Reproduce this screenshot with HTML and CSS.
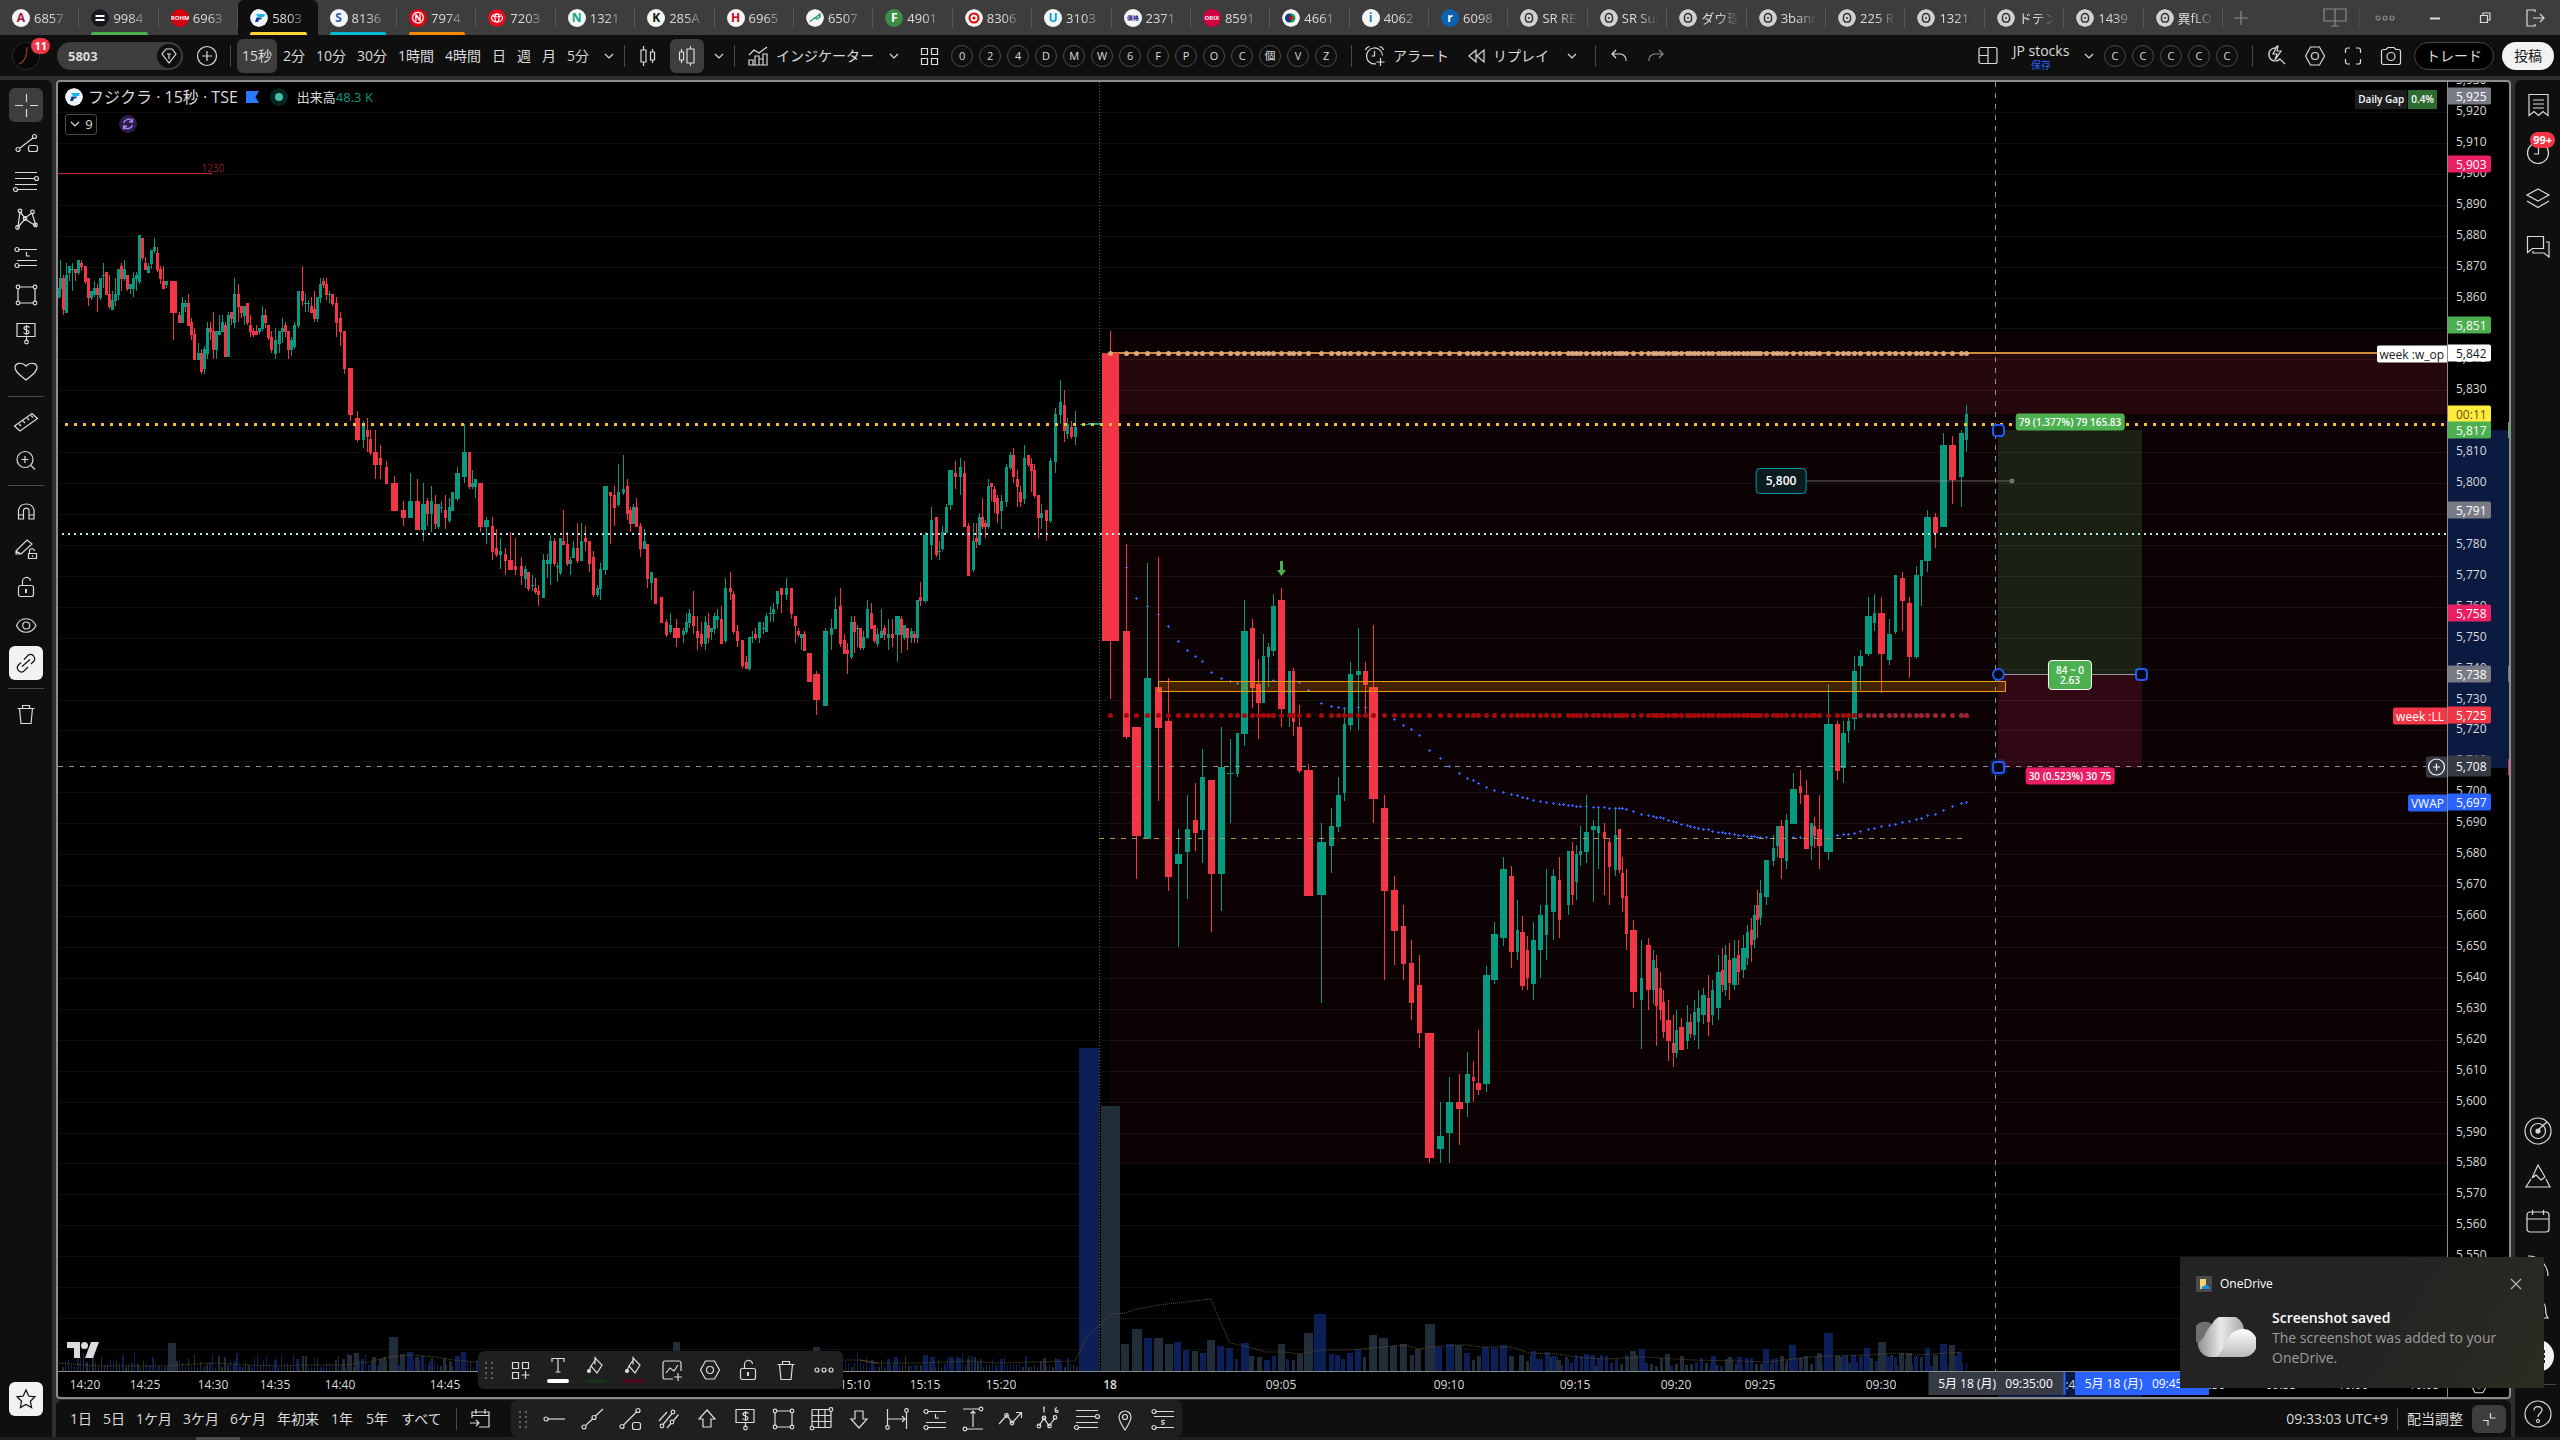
FILE: index.html
```html
<!DOCTYPE html>
<html lang="ja">
<head>
<meta charset="utf-8">
<meta name="viewport" content="width=device-width, initial-scale=1">
<title>5803 フジクラ</title>
<link rel="stylesheet" href="styles.css">
</head>
<body>
<svg class="sprite" aria-hidden="true">
  <symbol id="plus" viewBox="0 0 28 28"><path d="M14 7v14M7 14h14"/></symbol>
  <symbol id="plusc" viewBox="0 0 28 28"><circle cx="14" cy="14" r="9.5"/><path d="M14 9v10M9 14h10"/></symbol>
  <symbol id="chev" viewBox="0 0 12 28"><path d="M2 12l4 4 4-4"/></symbol>
  <symbol id="candles" viewBox="0 0 28 28"><path d="M9.5 4v4M9.5 20v4M7 8h5v12H7zM18.500 7v3M18.500 18v3M16.500 10h4v8h-4z"/></symbol>
  <symbol id="hollow" viewBox="0 0 28 28"><path d="M8.500 7v3M8.500 18v3M6.500 10h4v8h-4zM17.500 4v3M17.500 21v3M14 7h7v14h-7z"/></symbol>
  <symbol id="indic" viewBox="0 0 28 28"><path d="M5 13l5-5 5 3 8-6M5 23v-5h4v5zM11 23v-9h4v9M15 23v-6h4v6M19 23V12h4v11zM5 23h18"/></symbol>
  <symbol id="grid4" viewBox="0 0 28 28"><path d="M6.500 6.500h6v6h-6zM16.500 6.500h6v6h-6zM6.500 16.500h6v6h-6zM16.500 16.500h6v6h-6z"/></symbol>
  <symbol id="grid3" viewBox="0 0 28 28"><path d="M6.500 6.500h6v6h-6zM16.500 6.500h6v6h-6zM6.500 16.500h6v6h-6zM19.500 15v8M15.500 19h8"/></symbol>
  <symbol id="alarm" viewBox="0 0 28 28"><path d="M21.500 13.500a8 8 0 1 0-6.500 8.300M13.500 9v5h-3M4.500 8a5 5 0 0 1 4-3.500M18.500 4.500A5 5 0 0 1 22.500 8M19.500 16v8M15.500 20h8"/></symbol>
  <symbol id="rewind" viewBox="0 0 28 28"><path d="M13 8v12l-7-6zM21 8v12l-7-6z"/></symbol>
  <symbol id="undo" viewBox="0 0 28 28"><path d="M11 8l-4 4 4 4M7 12h8a6 6 0 0 1 6 7"/></symbol>
  <symbol id="redo" viewBox="0 0 28 28"><path d="M17 8l4 4-4 4M21 12h-8a6 6 0 0 0-6 7"/></symbol>
  <symbol id="layout" viewBox="0 0 28 28"><rect x="5" y="5.500" width="18" height="16" rx="2"/><path d="M14 5.500v16M5 13.500h9"/></symbol>
  <symbol id="search" viewBox="0 0 28 28"><path d="M14 6a6.500 6.500 0 1 0 4 11l5 5M15 4l-4 8h4l-2 6 6-9h-4l1-5z"/></symbol>
  <symbol id="hex" viewBox="0 0 28 28"><path d="M9.500 5h9l5 9-5 9h-9l-5-9z"/><circle cx="14" cy="14" r="3.500"/></symbol>
  <symbol id="full" viewBox="0 0 28 28"><path d="M6.500 11V8a2 2 0 0 1 2-2H11M17 6h2.500a2 2 0 0 1 2 2v3M21.500 17v3a2 2 0 0 1-2 2H17M11 22H8.500a2 2 0 0 1-2-2v-3"/></symbol>
  <symbol id="camera" viewBox="0 0 28 28"><path d="M4.500 9.500a2 2 0 0 1 2-2H9l2-2h6l2 2h2.500a2 2 0 0 1 2 2v11a2 2 0 0 1-2 2h-15a2 2 0 0 1-2-2z"/><circle cx="14" cy="14.500" r="4"/></symbol>
  <symbol id="screen" viewBox="0 0 28 28"><path d="M3 5h22v12H3zM14 5v17M10 22h8"/></symbol>
  <symbol id="dots" viewBox="0 0 28 28"><circle cx="7" cy="14" r="2"/><circle cx="14" cy="14" r="2"/><circle cx="21" cy="14" r="2"/></symbol>
  <symbol id="mini" viewBox="0 0 28 28"><path d="M9 14.500h10" stroke-width="2"/></symbol>
  <symbol id="restore" viewBox="0 0 28 28"><path d="M9.500 11.500h7v7h-7zM12 11V9h7v7h-2"/></symbol>
  <symbol id="exit" viewBox="0 0 28 28"><path d="M14 8V6H6v16h8v-2M12 14h11M19 10l4 4-4 4"/></symbol>
  <symbol id="cross" viewBox="0 0 28 28"><path d="M14.500 3v8M14.500 18v8M3 14.500h8M18 14.500h8"/></symbol>
  <symbol id="lineshape" viewBox="0 0 28 28"><circle cx="6" cy="20.500" r="2"/><circle cx="22.500" cy="7.500" r="2"/><path d="M8 19L21 9"/><rect x="16.500" y="16.500" width="9" height="6" rx="2"/></symbol>
  <symbol id="linebox" viewBox="0 0 28 28"><circle cx="5" cy="21.500" r="2"/><circle cx="21" cy="5.500" r="2"/><path d="M6.500 20L19.500 7"/><rect x="15.500" y="17.500" width="8" height="7" rx="2"/></symbol>
  <symbol id="fib" viewBox="0 0 28 28"><path d="M3 5.500h22M3 11.500h20M3 17.500h22M5 22.500h20"/><circle cx="24.500" cy="11.500" r="2"/><circle cx="3.500" cy="22.500" r="2"/></symbol>
  <symbol id="pattern" viewBox="0 0 28 28"><path d="M6 22L8 7l5 6 7-5 4 13-11-7z"/><circle cx="5.500" cy="22.500" r="1.800"/><circle cx="8" cy="6" r="1.800"/><circle cx="13" cy="13.500" r="1.800"/><circle cx="20.500" cy="7" r="1.800"/><circle cx="23.500" cy="20" r="1.800"/></symbol>
  <symbol id="forecast" viewBox="0 0 28 28"><circle cx="5" cy="6.500" r="2"/><circle cx="5" cy="22.500" r="2"/><path d="M7 6.500h18M5 17.500h20M7 22.500h18M14.500 9v4H18"/></symbol>
  <symbol id="rect" viewBox="0 0 28 28"><path d="M7 6h15M7 22h15M6 8v12M23 8v12"/><circle cx="6" cy="6" r="1.800"/><circle cx="23" cy="6" r="1.800"/><circle cx="6" cy="22" r="1.800"/><circle cx="23" cy="22" r="1.800"/></symbol>
  <symbol id="dollar" viewBox="0 0 28 28"><path d="M5 4.500h18v13H5zM14.500 17.500v4"/><circle cx="14.500" cy="23" r="1.800"/><path d="M17.500 8.500c-2-2-6-1-5.500 1s5 1 5 3.500-4 2.500-5.500.5M14.500 6v10"/></symbol>
  <symbol id="heart" viewBox="0 0 28 28"><path d="M14 23C8 18 3 15 3 10.500 3 6 10 4.500 14 9c4-4.500 11-3 11 1.500C25 15 20 18 14 23z"/></symbol>
  <symbol id="ruler" viewBox="0 0 28 28"><path d="M2.500 18L20 5.500l5.500 5L8 23zM7 16l2 2M11 13l2 2M15 10l2 2M19 7.500l2 2"/></symbol>
  <symbol id="zoomin" viewBox="0 0 28 28"><circle cx="13" cy="13.500" r="8"/><path d="M19 19.500l4 4M13 10v7M9.500 13.500h7"/></symbol>
  <symbol id="magnet" viewBox="0 0 28 28"><path d="M6.500 22V13a8 8 0 0 1 15.500 0v9h-5v-9a3 3 0 0 0-5.500 0v9zM6.500 18h5M17 18h5"/></symbol>
  <symbol id="pencil" viewBox="0 0 28 28"><path d="M4 16L15 5l5 4L9 19H4zM4 16l5 3M17.500 18v-1.500a2.500 2.500 0 0 1 5-.5M16.500 18.500h8v5h-8zM20.500 20.500v1.500"/></symbol>
  <symbol id="unlock" viewBox="0 0 28 28"><path d="M10.500 12.500V9a4 4 0 0 1 8-1"/><rect x="6.500" y="12.500" width="15" height="11" rx="2"/><path d="M14 16v4" stroke-width="2"/></symbol>
  <symbol id="eye" viewBox="0 0 28 28"><path d="M4.500 14.500c4-9 15-9 19.500 0-4.500 9-15.500 9-19.500 0z"/><circle cx="14.200" cy="14.500" r="3.500"/></symbol>
  <symbol id="link" viewBox="0 0 28 28"><path d="M10 17.500l8-7M12 10.500l3-3a4 4 0 0 1 7 0c2 3 0 5-2 6.500l-1 1M16 18l-3 3a4 4 0 0 1-7 0c-2-3 0-5 2-6.500l1-1"/></symbol>
  <symbol id="trash" viewBox="0 0 28 28"><path d="M5.500 8.500h17M7.500 8.500l1.500 15h10l1.500-15M10.500 8V5.500h7V8"/></symbol>
  <symbol id="star" viewBox="0 0 28 28"><path d="M14 5l2.800 6 6.200.8-4.600 4.400 1.200 6.300L14 19.400l-5.600 3.100 1.200-6.300L5 11.800l6.200-.8z"/></symbol>
  <symbol id="hline" viewBox="0 0 28 28"><circle cx="5" cy="14" r="2"/><path d="M7 14h17"/></symbol>
  <symbol id="trend" viewBox="0 0 28 28"><circle cx="5" cy="22" r="2"/><circle cx="15" cy="12.500" r="2"/><path d="M6.500 20.500l7-6.500M16.500 11L24 4"/></symbol>
  <symbol id="channel" viewBox="0 0 28 28"><circle cx="7" cy="21" r="1.800"/><circle cx="18" cy="7" r="1.800"/><circle cx="17" cy="17" r="1.800"/><path d="M8 19.500L17 8.500M4 16l8-9M12 23l4-4.500M18.500 15.500l5-6"/></symbol>
  <symbol id="up" viewBox="0 0 28 28"><path d="M14 5l8 9h-4v8h-8v-8H6z"/></symbol>
  <symbol id="down" viewBox="0 0 28 28"><path d="M14 23l8-9h-4V6h-8v8H6z"/></symbol>
  <symbol id="table" viewBox="0 0 28 28"><path d="M5 4.500h17M5 10.500h19M5 16.500h19M7 22.500h17M5 4.500v17M11.500 4.500v18M18 4.500v18M24 6v16.500"/><circle cx="24" cy="4.500" r="1.800"/><circle cx="5" cy="23" r="1.800"/></symbol>
  <symbol id="hrange" viewBox="0 0 28 28"><path d="M4.500 4v17M23.500 7v17M5 14h17M19 11l3 3-3 3"/><circle cx="4.500" cy="22.500" r="1.800"/><circle cx="23.500" cy="5.500" r="1.800"/></symbol>
  <symbol id="vrange" viewBox="0 0 28 28"><path d="M4 4h16M8 24h16M14 22V6M11.500 8.500L14 6l2.500 2.500"/><circle cx="22" cy="4" r="1.800"/><circle cx="6" cy="24" r="1.800"/></symbol>
  <symbol id="zig" viewBox="0 0 28 28"><path d="M2 19l8-9 5 8 9-10M19 7.500h5.500V13"/><circle cx="9.500" cy="10.500" r="1.800"/><circle cx="15" cy="18" r="1.800"/></symbol>
  <symbol id="elliott" viewBox="0 0 28 28"><path d="M4 21l5-8 5 8 6-8"/><circle cx="4" cy="21" r="1.800"/><circle cx="9" cy="13" r="1.800"/><circle cx="14.500" cy="21" r="1.800"/><circle cx="20" cy="12.500" r="1.800"/><path d="M8 3.500l1-1v5M22 2.500c-3 1-2 5 0 5s1-3-1-2"/></symbol>
  <symbol id="pin" viewBox="0 0 28 28"><path d="M14 25c-4-6-6-9-6-13a6 6 0 0 1 12 0c0 4-2 7-6 13z"/><circle cx="14" cy="12" r="2.500"/></symbol>
  <symbol id="spos" viewBox="0 0 28 28"><circle cx="5" cy="6.500" r="2"/><circle cx="5" cy="22.500" r="2"/><path d="M7 6.500h18M5 11.500h20M7 22.500h18M16 15.500c-4-1-4 1.500-2 2s2 2.500-2 1.500"/></symbol>
  <symbol id="grip" viewBox="0 0 14 28"><path d="M3 7h2M9 7h2M3 12h2M9 12h2M3 17h2M9 17h2M3 22h2M9 22h2" stroke-width="2" opacity=".35"/></symbol>
  <symbol id="text" viewBox="0 0 28 28"><path d="M8 9V5.500h12V9M14 5.500V19M11.500 19h5"/></symbol>
  <symbol id="bucket" viewBox="0 0 28 28"><path d="M13 3.500v8M9 13l5-7 6 6-5 8zM9 13l-2 5"/><circle cx="7" cy="18" r="1.500" fill="currentColor"/></symbol>
  <symbol id="tpl" viewBox="0 0 28 28"><path d="M23 15V7a2 2 0 0 0-2-2H7a2 2 0 0 0-2 2v14a2 2 0 0 0 2 2h8M8 17l4-5 4 3 4-6M20 17v8M16 21h8"/></symbol>
  <symbol id="goto" viewBox="0 0 28 28"><path d="M6 13V7h17v15H13M6 10.500h17M10 4v5M19 4v5M4 18h9M10 15l3 3-3 3"/></symbol>
  <symbol id="watch" viewBox="0 0 28 28"><path d="M5 3.500h19v21l-5-4-4.500 4-4.500-4-5 4zM9 9h11M9 13h11M9 17h11"/></symbol>
  <symbol id="clock" viewBox="0 0 28 28"><circle cx="14" cy="15" r="10.500"/><path d="M14.500 9v7H10"/></symbol>
  <symbol id="layers" viewBox="0 0 28 28"><path d="M14 4l11 6-11 6-11-6zM3 16l11 6.500L25 16"/></symbol>
  <symbol id="chat" viewBox="0 0 28 28"><path d="M3.500 4.500h16v12h-11l-5 4zM22 10h3v15l-5-4H9v-2"/></symbol>
  <symbol id="target" viewBox="0 0 28 28"><circle cx="14" cy="14" r="13"/><circle cx="14" cy="14" r="7.500"/><circle cx="14" cy="14" r="2" fill="currentColor"/><path d="M15 12l8-7"/></symbol>
  <symbol id="pyramid" viewBox="0 0 28 28"><path d="M14 3l7 12-4 3-5-5-4 3zM7 17l-5 8h24l-4-8"/></symbol>
  <symbol id="cal" viewBox="0 0 28 28"><rect x="3" y="5" width="22" height="20" rx="3"/><path d="M3 12h22M8.500 3v5M19.500 3v5" /></symbol>
  <symbol id="feed" viewBox="0 0 28 28"><path d="M4 4a20 20 0 0 1 20 20M4 11a13 13 0 0 1 13 13"/></symbol>
  <symbol id="bell" viewBox="0 0 28 28"><path d="M5 21h19c-3-3-2-6-2.500-10a7 7 0 0 0-14 0C7 15 8 18 5 21zM11 24h6"/></symbol>
  <symbol id="help" viewBox="0 0 28 28"><circle cx="14" cy="14" r="13"/><path d="M10 10.500c0-5 8-5 8-.5 0 3-4 3.500-4 7"/><circle cx="14" cy="21" r="1.500"/></symbol>
  <symbol id="min2" viewBox="0 0 28 28"><path d="M15.500 8v5h5M8 15.500h5v5"/></symbol>
  <symbol id="head" viewBox="0 0 18 18"><circle cx="9" cy="9" r="9" fill="#d1d1d1" stroke="none"/><path d="M5.500 11V8a3.500 3.500 0 0 1 7 0v3l-1.500 2h-4zM9 8v2" stroke="#333" stroke-width="1.500"/></symbol>
  <symbol id="fuji" viewBox="0 0 18 18"><circle cx="9" cy="9" r="9" fill="#eef3fa" stroke="none"/><path d="M6 5h9l-1 3H8z" fill="#19b5f1" stroke="none"/><path d="M5 13l1.500-4.500H12L11 10.500H9L8 13z" fill="#0b3b8c" stroke="none"/></symbol>
  <symbol id="softbank" viewBox="0 0 18 18"><circle cx="9" cy="9" r="9" fill="#15191d" stroke="none"/><path d="M4.500 6h9v2h-9zM4.500 10h9v2h-9z" fill="#fff" stroke="none"/></symbol>
  <symbol id="ring" viewBox="0 0 18 18"><circle cx="9" cy="9" r="9" fill="#f5f5f5" stroke="none"/><circle cx="9" cy="9" r="4.500" stroke="#e60000" stroke-width="2"/><circle cx="9" cy="9" r="1.500" fill="#e60000" stroke="none"/></symbol>
  <symbol id="toyota" viewBox="0 0 18 18"><circle cx="9" cy="9" r="9" fill="#eb0a1e" stroke="none"/><ellipse cx="9" cy="9" rx="5.500" ry="4" stroke="#fff"/><ellipse cx="9" cy="9" rx="2" ry="4" stroke="#fff"/><path d="M5 7c2 1 6 1 8 0" stroke="#fff"/></symbol>
  <symbol id="olc" viewBox="0 0 18 18"><circle cx="9" cy="9" r="9" fill="#f5f5f5" stroke="none"/><circle cx="7.500" cy="9" r="4.500" fill="#0b3b8c" stroke="none"/><path d="M9 4.500a4.500 4.500 0 0 1 0 9z" fill="#1b9c4a" stroke="none"/><circle cx="9" cy="9" r="2" fill="#e60012" stroke="none"/></symbol>
  <symbol id="slash" viewBox="0 0 18 18"><circle cx="9" cy="9" r="9" fill="#f5f5f5" stroke="none"/><path d="M4 12.500l5-4M9 9l5-4v3l-3 2z" stroke="#2ea36b" stroke-width="1.500"/></symbol>
</svg>

<header class="tabbar">
  <nav class="tabs" aria-label="タブ">
    <a class="tab" href="#"><i class="logo" style="background:#f5f5f5;color:#a3123f">A</i><span>6857</span></a>
    <a class="tab green" href="#"><svg class="logo"><use href="#softbank"/></svg><span>9984</span></a>
    <a class="tab" href="#"><i class="logo tiny" style="background:#d7000f;color:#fff">ROHM</i><span>6963</span></a>
    <a class="tab yellow active" href="#"><svg class="logo"><use href="#fuji"/></svg><span>5803</span></a>
    <a class="tab cyan" href="#"><i class="logo" style="background:#f5f5f5;color:#1e64b4">S</i><span>8136</span></a>
    <a class="tab orange" href="#"><i class="logo" style="background:#e60012;color:#fff">Ⓝ</i><span>7974</span></a>
    <a class="tab" href="#"><svg class="logo"><use href="#toyota"/></svg><span>7203</span></a>
    <a class="tab" href="#"><i class="logo" style="background:#f5f5f5;color:#0aa58c">N</i><span>1321</span></a>
    <a class="tab" href="#"><i class="logo" style="background:#f5f5f5;color:#111">K</i><span>285A</span></a>
    <a class="tab" href="#"><i class="logo" style="background:#f5f5f5;color:#cf0010">H</i><span>6965</span></a>
    <a class="tab" href="#"><svg class="logo"><use href="#slash"/></svg><span>6507</span></a>
    <a class="tab" href="#"><i class="logo" style="background:#3c8c46;color:#fff">F</i><span>4901</span></a>
    <a class="tab" href="#"><svg class="logo"><use href="#ring"/></svg><span>8306</span></a>
    <a class="tab" href="#"><i class="logo" style="background:#f5f5f5;color:#00a0e9">U</i><span>3103</span></a>
    <a class="tab" href="#"><i class="logo tiny" style="background:#f5f5f5;color:#1d2088">価格</i><span>2371</span></a>
    <a class="tab" href="#"><i class="logo tiny" style="background:#d2003c;color:#fff">ORIX</i><span>8591</span></a>
    <a class="tab" href="#"><svg class="logo"><use href="#olc"/></svg><span>4661</span></a>
    <a class="tab" href="#"><i class="logo" style="background:#f5f5f5;color:#1e78be">i</i><span>4062</span></a>
    <a class="tab" href="#"><i class="logo" style="background:#0b62b0;color:#fff">r</i><span>6098</span></a>
    <a class="tab" href="#"><svg class="logo"><use href="#head"/></svg><span>SR REV</span></a>
    <a class="tab" href="#"><svg class="logo"><use href="#head"/></svg><span>SR Sup</span></a>
    <a class="tab" href="#"><svg class="logo"><use href="#head"/></svg><span>ダウ理</span></a>
    <a class="tab" href="#"><svg class="logo"><use href="#head"/></svg><span>3bann</span></a>
    <a class="tab" href="#"><svg class="logo"><use href="#head"/></svg><span>225 R</span></a>
    <a class="tab" href="#"><svg class="logo"><use href="#head"/></svg><span>1321 S</span></a>
    <a class="tab" href="#"><svg class="logo"><use href="#head"/></svg><span>ドテン</span></a>
    <a class="tab" href="#"><svg class="logo"><use href="#head"/></svg><span>1439</span></a>
    <a class="tab" href="#"><svg class="logo"><use href="#head"/></svg><span>異fLO</span></a>
  </nav>
  <div class="wincontrols">
    <button class="dim" aria-label="新規タブ"><svg><use href="#plus"/></svg></button>
    <span class="grow"></span>
    <button class="dim" aria-label="画面"><svg><use href="#screen"/></svg></button>
    <span class="bar"></span>
    <button class="dim w50" aria-label="メニュー"><svg><use href="#dots"/></svg></button>
    <button class="w50" aria-label="最小化"><svg><use href="#mini"/></svg></button>
    <button class="w50" aria-label="元に戻す"><svg><use href="#restore"/></svg></button>
    <button class="w50" aria-label="終了"><svg><use href="#exit"/></svg></button>
  </div>
</header>

<div class="toolbar">
  <button class="avatar" aria-label="プロフィール"><svg viewBox="0 0 28 28"><circle cx="14" cy="14" r="13.500" fill="#070707" stroke="#1c2430"/><path d="M7 22c6-2 8-8 8-17" stroke="#8b3a1c" fill="none"/></svg><b class="badge">11</b></button>
  <div class="symbolbox"><input aria-label="シンボル" value="5803"><button aria-label="お気に入り"><svg><path d="M14 21l-7-9 4-5h6l4 5zM14 17v-5M12 12h4" /></svg></button></div>
  <button class="w40" aria-label="比較"><svg><use href="#plusc"/></svg></button>
  <span class="bar"></span>
  <div class="frames">
    <button class="on">15秒</button><button>2分</button><button>10分</button><button>30分</button><button>1時間</button><button>4時間</button><button>日</button><button>週</button><button>月</button><button>5分</button>
  </div>
  <button class="w30" aria-label="時間足"><svg class="chev"><use href="#chev"/></svg></button>
  <span class="bar after"></span>
  <button class="w40" aria-label="ローソク足"><svg><use href="#candles"/></svg></button>
  <button class="on w34" aria-label="中空ローソク足"><svg><use href="#hollow"/></svg></button>
  <button class="w30" aria-label="チャート種類"><svg class="chev"><use href="#chev"/></svg></button>
  <span class="bar wide"></span>
  <button class="label"><svg><use href="#indic"/></svg>インジケーター</button>
  <button class="w40" aria-label="お気に入り"><svg class="chev"><use href="#chev"/></svg></button>
  <button class="w30" aria-label="テンプレート"><svg><use href="#grid4"/></svg></button>
  <div class="rounds">
    <button>0</button><button>2</button><button>4</button><button>D</button><button>M</button><button>W</button><button>6</button><button>F</button><button>P</button><button>O</button><button>C</button><button>個</button><button>V</button><button>Z</button>
  </div>
  <span class="bar wide"></span>
  <button class="label"><svg><use href="#alarm"/></svg>アラート</button>
  <button class="label tight"><svg><use href="#rewind"/></svg>リプレイ</button>
  <button class="w46" aria-label="リプレイ設定"><svg class="chev"><use href="#chev"/></svg></button>
  <span class="bar after"></span>
  <button class="w40" aria-label="元に戻す"><svg><use href="#undo"/></svg></button>
  <button class="w34 dim" aria-label="やり直し"><svg><use href="#redo"/></svg></button>
  <span class="grow"></span>
  <button class="w40" aria-label="レイアウト"><svg><use href="#layout"/></svg></button>
  <button class="save"><span>JP stocks</span><span class="blue">保存</span></button>
  <button class="w30" aria-label="レイアウト管理"><svg class="chev"><use href="#chev"/></svg></button>
  <div class="rounds near"><button>C</button><button>C</button><button>C</button><button>C</button><button>C</button></div>
  <span class="bar after"></span>
  <button class="w40" aria-label="検索"><svg><use href="#search"/></svg></button>
  <button class="w38" aria-label="設定"><svg><use href="#hex"/></svg></button>
  <button class="w38" aria-label="全画面"><svg><use href="#full"/></svg></button>
  <button class="w38" aria-label="スナップショット"><svg><use href="#camera"/></svg></button>
  <button class="trade">トレード</button>
  <button class="post">投稿</button>
</div>

<div class="workspace">
  <aside class="side left">
    <button class="on" aria-label="十字"><svg><use href="#cross"/></svg></button>
    <button aria-label="線"><svg><use href="#lineshape"/></svg></button>
    <button aria-label="フィボナッチ"><svg><use href="#fib"/></svg></button>
    <button aria-label="パターン"><svg><use href="#pattern"/></svg></button>
    <button aria-label="予測"><svg><use href="#forecast"/></svg></button>
    <button aria-label="図形"><svg><use href="#rect"/></svg></button>
    <button aria-label="注釈"><svg><use href="#dollar"/></svg></button>
    <button aria-label="アイコン"><svg><use href="#heart"/></svg></button>
    <hr>
    <button aria-label="計測"><svg><use href="#ruler"/></svg></button>
    <button aria-label="ズーム"><svg><use href="#zoomin"/></svg></button>
    <hr>
    <button aria-label="マグネット"><svg><use href="#magnet"/></svg></button>
    <button aria-label="描画モード"><svg><use href="#pencil"/></svg></button>
    <button aria-label="ロック"><svg><use href="#unlock"/></svg></button>
    <button aria-label="表示"><svg><use href="#eye"/></svg></button>
    <button class="white" aria-label="同期"><svg><use href="#link"/></svg></button>
    <hr>
    <button aria-label="削除"><svg><use href="#trash"/></svg></button>
    <span class="grow"></span>
    <button class="white" aria-label="お気に入りツール"><svg><use href="#star"/></svg></button>
  </aside>

  <main class="center">
    <section class="frame">
      <div class="plot" id="plot">
        <svg class="canvas" id="canvas" viewBox="58 82 2389 1289" preserveAspectRatio="none"></svg>
        <div class="legend">
          <div class="row"><svg class="logo"><use href="#fuji"/></svg><h1>フジクラ · 15秒 · TSE</h1><svg class="flag" viewBox="0 0 13 12"><path d="M0 0h13l-3.500 6 3.500 6H0z" fill="#2979ff"/></svg><i class="status"></i><span class="vol">出来高</span><span class="volnum">48.3 K</span></div>
          <div class="row second"><button class="count"><svg class="chev"><use href="#chev"/></svg>9</button><svg class="sync" viewBox="0 0 18 18"><circle cx="9" cy="9" r="9" fill="#2c1c47"/><path d="M4.500 8a5 5 0 0 1 8.500-2M13.500 10a5 5 0 0 1-8.500 2M13.500 3.500V7H10M4.500 14.500V11H8" stroke="#a97df0" stroke-width="1.500" fill="none"/></svg></div>
        </div>
        <svg class="tvmark" viewBox="0 0 32 16" aria-label="TradingView"><path d="M0 0h13v16H7V6H0zM24 0h8l-6 16h-8z" fill="#dbdbdb"/><circle cx="17.500" cy="3.500" r="3.500" fill="#dbdbdb"/></svg>
        <div class="gap"><span>Daily Gap</span><b>0.4%</b></div>
      </div>
      <div class="yaxis" id="yaxis"></div>
      <div class="xaxis" id="xaxis"></div>
      <div class="corner"><svg><use href="#hex"/></svg></div>
      <div class="floatbar">
        <svg class="grip"><use href="#grip"/></svg>
        <button aria-label="テンプレート"><svg><use href="#grid3"/></svg></button>
        <button class="sw white-sw" aria-label="文字色"><svg><use href="#text"/></svg></button>
        <button class="sw green-sw" aria-label="利益の色"><svg><use href="#bucket"/></svg></button>
        <button class="sw red-sw" aria-label="損失の色"><svg><use href="#bucket"/></svg></button>
        <button aria-label="注文"><svg><use href="#tpl"/></svg></button>
        <button aria-label="設定"><svg><use href="#hex"/></svg></button>
        <button aria-label="ロック"><svg><use href="#unlock"/></svg></button>
        <button aria-label="削除"><svg><use href="#trash"/></svg></button>
        <button aria-label="その他"><svg><use href="#dots"/></svg></button>
      </div>
    </section>
    <footer class="bottom">
      <div class="ranges">
        <button>1日</button><button>5日</button><button>1ケ月</button><button>3ケ月</button><button>6ケ月</button><button>年初来</button><button>1年</button><button>5年</button><button>すべて</button>
      </div>
      <span class="bar"></span>
      <button class="w46" aria-label="日付へ移動"><svg><use href="#goto"/></svg></button>
      <div class="drawbar">
        <svg class="grip"><use href="#grip"/></svg>
        <button aria-label="水平線"><svg><use href="#hline"/></svg></button>
        <button aria-label="トレンド"><svg><use href="#trend"/></svg></button>
        <button aria-label="線"><svg><use href="#linebox"/></svg></button>
        <button aria-label="チャネル"><svg><use href="#channel"/></svg></button>
        <button aria-label="上"><svg><use href="#up"/></svg></button>
        <button aria-label="価格注釈"><svg><use href="#dollar"/></svg></button>
        <button aria-label="長方形"><svg><use href="#rect"/></svg></button>
        <button aria-label="表"><svg><use href="#table"/></svg></button>
        <button aria-label="下"><svg><use href="#down"/></svg></button>
        <button aria-label="日付範囲"><svg><use href="#hrange"/></svg></button>
        <button aria-label="ロング"><svg><use href="#forecast"/></svg></button>
        <button aria-label="価格範囲"><svg><use href="#vrange"/></svg></button>
        <button aria-label="パス"><svg><use href="#zig"/></svg></button>
        <button aria-label="エリオット"><svg><use href="#elliott"/></svg></button>
        <button aria-label="フィボナッチ"><svg><use href="#fib"/></svg></button>
        <button aria-label="ピン"><svg><use href="#pin"/></svg></button>
        <button aria-label="ショート"><svg><use href="#spos"/></svg></button>
      </div>
      <span class="grow"></span>
      <button class="clock">09:33:03 UTC+9</button>
      <span class="bar"></span>
      <button class="adj">配当調整</button>
      <button class="on w34" aria-label="縮小"><svg><use href="#min2"/></svg></button>
    </footer>
  </main>

  <aside class="side right">
    <button aria-label="ウォッチリスト"><svg><use href="#watch"/></svg></button>
    <button aria-label="アラート"><svg><use href="#clock"/></svg><b class="badge">99+</b></button>
    <button aria-label="データ"><svg><use href="#layers"/></svg></button>
    <button aria-label="チャット"><svg><use href="#chat"/></svg></button>
    <span class="grow"></span>
    <button aria-label="スクリーナー"><svg><use href="#target"/></svg></button>
    <button aria-label="パイン"><svg><use href="#pyramid"/></svg></button>
    <button aria-label="カレンダー"><svg><use href="#cal"/></svg></button>
    <button aria-label="フィード"><svg><use href="#feed"/></svg></button>
    <button aria-label="通知"><svg><use href="#bell"/></svg></button>
    <button aria-label="キーパッド"><svg viewBox="0 0 34 34" class="pad"><circle cx="17" cy="17" r="16" fill="#f2f2f2" stroke="none"/><path d="M12 11h4v3h-4zM19 11h5v3h-5zM12 16h4v3h-4zM19 16h5v3h-5zM12 21h4v3h-4zM19 21h5v3h-5z" fill="#111" stroke="none"/></svg></button>
    <hr>
    <button aria-label="ヘルプ"><svg><use href="#help"/></svg></button>
  </aside>
</div>
<div class="strip"></div>

<aside class="toast" role="status">
  <div class="toast-head">
    <svg viewBox="0 0 16 16" class="odfolder"><path d="M0 0h16v16H0z" fill="#4a4a4a"/><path d="M4 3h6v10H4z" fill="#f5d277"/><path d="M6 13a2 2 0 0 1 2-3 3 3 0 0 1 5 1 1 1 0 0 1 0 2z" fill="#1490df"/></svg>
    <span>OneDrive</span><button aria-label="閉じる"><svg viewBox="0 0 16 16"><path d="M3 3l10 10M13 3L3 13"/></svg></button>
  </div>
  <div class="toast-body">
    <svg viewBox="0 0 60 40"><defs><linearGradient id="cl" x1="0" x2="1"><stop offset="0" stop-color="#8f8f8f"/><stop offset=".5" stop-color="#e8e8e8"/><stop offset="1" stop-color="#a8a8a8"/></linearGradient><linearGradient id="cl2" x1="0" y1="0" x2="0" y2="1"><stop offset="0" stop-color="#fff"/><stop offset="1" stop-color="#b9b9b9"/></linearGradient></defs><path d="M16 40A13 13 0 0 1 10 15 10 10 0 0 1 16 7 17 17 0 0 1 48 12L30 40z" fill="url(#cl)"/><path d="M2 26A11 11 0 0 1 16 7Q10 14 8 20z" fill="#707070"/><path d="M20 40C32 32 28 14 46 12A14 14 0 0 1 48 40z" fill="url(#cl2)"/></svg>
    <div><strong>Screenshot saved</strong><p>The screenshot was added to your OneDrive.</p></div>
  </div>
</aside>
<script src="chart.js"></script>
</body>
</html>
```
FILE: styles.css
```css
* { box-sizing: border-box; }
body {
  margin: 0;
  height: 100vh;
  display: flex;
  flex-direction: column;
  overflow: hidden;
  background: #2e2e2e;
  color: #dbdbdb;
  font: 14px/18px "Open Sans", "Noto Sans CJK JP", sans-serif;
}
button {
  display: flex;
  align-items: center;
  justify-content: center;
  position: relative;
  flex: none;
  margin: 0;
  padding: 0;
  border: 0;
  border-radius: 6px;
  background: none;
  color: inherit;
  font: inherit;
  white-space: nowrap;
}
svg { display: block; width: 28px; height: 28px; flex: none; fill: none; stroke: currentColor; stroke-width: 1.200; }
.sprite { position: absolute; width: 0; height: 0; }
.chev { width: 12px; }
.grow { flex: 1; }
.bar { flex: none; width: 1px; height: 22px; background: #4a4a4a; }
.bar.after { margin-right: 3px; }
.bar.wide { margin-right: 6px; }
.on { background: #3d3d3d; }
.dim { color: #8c8c8c; }
.w30 { width: 30px; }
.w34 { width: 34px; }
.w38 { width: 38px; }
.w40 { width: 40px; }
.w46 { width: 46px; }
.w50 { width: 50px; }

.tabbar { flex: none; height: 35px; display: flex; background: #3d3d3d; }
.tabs { flex: 1; display: grid; grid-template-columns: repeat(28, 1fr); }
.tab {
  position: relative;
  display: flex;
  align-items: center;
  gap: 4px;
  min-width: 0;
  padding: 0 9px 0 12px;
  overflow: hidden;
  color: #dbdbdb;
  font-size: 13px;
  text-decoration: none;
  white-space: nowrap;
}
.tab span { flex: 1; overflow: hidden; -webkit-mask-image: linear-gradient(90deg, #000 45%, transparent 100%); mask-image: linear-gradient(90deg, #000 45%, transparent 100%); }
.tab::before { content: ""; position: absolute; right: 0; top: 7px; width: 1px; height: 21px; background: #575757; }
.tab::after { content: ""; position: absolute; left: 12px; right: 11px; bottom: 0; height: 3px; border-radius: 2px 2px 0 0; background: transparent; }
.green::after { background: #4caf50; }
.yellow::after { background: #fdd835; }
.cyan::after { background: #00bcd4; }
.orange::after { background: #fb8c00; }
.active { background: #0f0f0f; border-radius: 6px 6px 0 0; }
.active::before { display: none; }
.logo { flex: none; width: 18px; height: 18px; border-radius: 9px; font: bold 12px/18px "Open Sans", sans-serif; text-align: center; overflow: hidden; }
.tiny { font-size: 6px; }
.wincontrols { flex: none; width: 337px; display: flex; align-items: center; }
.wincontrols > button { height: 35px; }
.wincontrols > button:first-child { width: 36px; }
.wincontrols > .grow + button { width: 48px; }

.toolbar { flex: none; height: 41px; display: flex; align-items: center; padding: 1px 6px 0; background: #0f0f0f; margin-bottom: 4px; }
.toolbar > button { height: 34px; }
.toolbar .avatar { width: 40px; margin-right: 11px; }
.badge { position: absolute; top: -1px; right: -4px; min-width: 18px; height: 16px; padding: 0 3px; border-radius: 9px; background: #f23645; color: #fff; font-size: 11px; line-height: 16px; }
.symbolbox { flex: none; display: flex; align-items: center; width: 126px; height: 28px; padding: 0 2px 0 11px; border-radius: 14px; background: #3d3d3d; }
.symbolbox input { flex: 1; min-width: 0; border: 0; padding: 0; background: none; color: #dbdbdb; font: bold 13px "Open Sans", sans-serif; outline: 0; }
.symbolbox button { width: 24px; height: 24px; border-radius: 12px; background: #0f0f0f; }
.symbolbox + button { margin: 0 3px 0 4px; }
.frames { display: flex; gap: 1px; margin-left: 6px; }
.frames button { height: 34px; padding: 0 5px; }
.toolbar .on.w34 { margin-left: 2px; }
.label { gap: 4px; padding-left: 2px; }
.toolbar .label { margin-left: 1px; }
.toolbar .label.tight { gap: 2px; margin-left: 12px; }
.rounds { display: flex; gap: 6px; margin: 0 14px 0 7px; }
.rounds.near { margin-left: 0; }
.rounds button { width: 22px; height: 22px; border: 1px solid #4a4a4a; border-radius: 11px; font-size: 11px; line-height: 16px; }
.save { flex-direction: column; width: 66px; font-size: 14px; line-height: 17px; }
.save .blue { color: #2962ff; font-size: 10px; line-height: 12px; }
.toolbar .trade { width: 80px; height: 28px; margin: 0 8px 0 4px; border: 1px solid #4a4a4a; border-radius: 14px; background: #000; }
.toolbar .post { width: 52px; height: 28px; border-radius: 14px; background: #f2f2f2; color: #0f0f0f; }

.workspace { flex: 1; min-height: 0; display: flex; gap: 4px; }
.side { flex: none; display: flex; flex-direction: column; align-items: center; background: #0f0f0f; }
.side hr { width: 36px; height: 1px; margin: 6px 0; border: 0; background: #4a4a4a; flex: none; }
.left { width: 52px; padding: 8px 0 21px; border-radius: 0 6px 0 0; }
.left button { width: 34px; height: 34px; margin-bottom: 4px; }
.left hr { margin: 4px 0 8px; }
.white { background: #f2f2f2; color: #0f0f0f; }
.left button:last-child { margin: 0; }
.right { width: 45px; border-radius: 6px 0 0 0; padding: 1px 0; }
.right button { width: 45px; height: 47px; }
.right .grow ~ button { height: 45px; }
.right .badge { top: 4px; right: 5px; }
.right .pad { width: 34px; height: 34px; }

.center { flex: 1; min-width: 0; display: flex; flex-direction: column; gap: 1px; }
.frame {
  position: relative;
  flex: 1;
  min-height: 0;
  display: grid;
  grid-template: 1fr 26px / 1fr 62px;
  border: 2px solid #8c8c8c;
  border-radius: 4px;
  background: #000;
  overflow: hidden;
}
.plot { position: relative; overflow: hidden; }
.canvas { position: absolute; inset: 0; width: 100%; height: 100%; stroke: none; }
.legend { position: absolute; left: 7px; top: 5px; }
.row { display: flex; align-items: center; height: 20px; }
.row h1 { margin: 0 8px 0 5px; font-size: 16px; line-height: 20px; font-weight: normal; }
.flag { width: 13px; height: 12px; stroke: none; }
.status { width: 18px; height: 18px; margin: 0 9px 0 11px; border: 5px solid #06231e; border-radius: 9px; background: #42bda8; }
.vol, .volnum { font-size: 13px; }
.volnum { color: #089981; }
.second { height: 22px; margin-top: 6px; gap: 16px; }
.count { width: 32px; height: 21px; gap: 4px; border: 1px solid #4a4a4a; border-radius: 3px; font-size: 13px; }
.sync { width: 18px; height: 18px; stroke: none; margin-left: 6px; }
.tvmark { position: absolute; left: 9px; bottom: 13px; width: 32px; height: 16px; stroke: none; }
.gap { position: absolute; right: 10px; top: 8px; display: flex; gap: 1px; color: #fff; font-size: 10px; line-height: 19px; font-weight: 600; }
.gap span { padding: 0 3px; background: #1c1c1e; }
.gap b { padding: 0 3px; background: #2e6b30; font-weight: 600; }
.note { position: absolute; transform: translate(-50%, -50%); border-radius: 3px; padding: 0 3px; background: #4caf50; color: #fff; font-size: 10px; font-weight: 600; line-height: 17px; white-space: pre; text-align: center; }
.note.pink { background: #e91e63; }
.note.ratio { padding: 4px 7px; border: 1px solid #fff; border-radius: 4px; line-height: 10px; }
.note.callout { padding: 0 9px; border: 1px solid #0097a7; border-radius: 4px; background: #0a1c20; font-size: 12px; line-height: 24px; }
.note.plain { background: none; color: #8f1f2a; font-size: 10px; font-weight: normal; }
.ltag { position: absolute; right: 0; transform: translateY(-50%); height: 17px; padding: 0 3px; border-radius: 2px 0 0 2px; font-size: 12px; line-height: 17px; color: #fff; }
.ltag svg { width: 19px; height: 19px; }
.ltag.cross { height: 21px; padding: 1px; background: #363a45; }

.yaxis { position: relative; border-left: 1px solid #8c8c8c; overflow: hidden; }
.tick, .ytag { position: absolute; left: 0; transform: translateY(-50%); width: 43px; padding-left: 8px; font-size: 12px; line-height: 17px; }
.ytag { border-radius: 0 2px 2px 0; color: #fff; }
.ytag.tall { line-height: 21px; }
.span { position: absolute; left: 0; right: 0; background: #0a1a40; }
.edge { position: absolute; right: 0; width: 1px; height: 16px; transform: translateY(-50%); }
.xaxis { position: relative; border-top: 1px solid #8c8c8c; overflow: hidden; font-size: 12px; line-height: 25px; }
.xaxis span { position: absolute; top: 0; transform: translateX(-50%); white-space: pre; }
.xaxis .day { font-weight: 600; }
.xaxis .range { height: 26px; background: #0a1a40; }
.xaxis .tag { height: 23px; line-height: 24px; background: #2962ff; color: #fff; text-align: center; }
.xaxis .tag.gray { background: #363a45; }
.corner { border-left: 1px solid #8c8c8c; border-top: 1px solid #8c8c8c; display: flex; align-items: center; justify-content: center; }
.corner svg { width: 24px; height: 24px; }
.floatbar { position: absolute; left: 420px; bottom: 8px; display: flex; align-items: center; height: 38px; padding: 0 0 0 4px; border-radius: 6px; background: #1f1f1f; }
.grip { width: 14px; height: 28px; }
.floatbar button, .drawbar button { width: 38px; height: 38px; }
.floatbar .grip { margin-right: 5px; }
.sw::after { content: ""; position: absolute; left: 8px; right: 8px; bottom: 6px; height: 4px; border-radius: 2px; background: #fff; }
.sw svg { margin-top: -6px; }
.green-sw::after { background: #16301a; }
.red-sw::after { background: #4a0a20; }

.bottom { flex: none; height: 37px; display: flex; align-items: center; padding: 0 5px 0 9px; background: #0f0f0f; border-radius: 6px 6px 0 0; }
.ranges { display: flex; gap: 1px; margin-right: 8px; }
.ranges button { height: 30px; padding: 0 5px; }
.ranges button:nth-child(n+7) { padding: 0 6px; }
.drawbar { display: flex; align-items: center; height: 37px; margin-left: 8px; padding: 0 0 0 5px; border-radius: 6px; background: #1f1f1f; }
.drawbar .grip { margin-right: 6px; }
.clock, .adj { margin: 0 9px; }
.strip { flex: none; height: 3px; background: linear-gradient(90deg, #1f1f1f 196px, #4a4a4a 196px, #4a4a4a 240px, #1f1f1f 240px); }

.toast { position: fixed; right: 16px; bottom: 52px; width: 364px; height: 131px; padding: 18px 16px; background: linear-gradient(120deg, #232323 50%, #2b2c22); color: #fff; }
.toast-head { display: flex; align-items: center; gap: 8px; height: 17px; font-size: 12px; }
.toast-head button { margin-left: auto; margin-right: 4px; color: #b5b5b5; }
.toast-head button svg { width: 16px; height: 16px; }
.odfolder { width: 16px; height: 16px; stroke: none; }
.toast-body { display: flex; gap: 16px; margin-top: 16px; line-height: 20px; }
.toast-body svg { width: 60px; height: 40px; margin-top: 9px; stroke: none; }
.toast-body strong { display: block; font-size: 14px; font-weight: 600; }
.toast-body p { margin: 0; color: #9d9d9d; }
```
FILE: chart.js
```js
const X0 = 58, Y0 = 82, W = 2389, H = 1289;
const NS = 'http://www.w3.org/2000/svg';
const canvas = document.getElementById('canvas');
const plot = document.getElementById('plot');
const yaxis = document.getElementById('yaxis');
const xaxis = document.getElementById('xaxis');
const UP = '#089981', DOWN = '#f23645';
const px = x => ((x - X0) / W * 100) + '%';
const py = y => ((y - Y0) / H * 100) + '%';
const priceY = p => 390.3 + (5830 - p) * 3.0925;

function shape(name, attrs) {
  const el = document.createElementNS(NS, name);
  for (const k in attrs) el.setAttribute(k, attrs[k]);
  canvas.appendChild(el);
  return el;
}
function box(x, y, w, h, fill) { return shape('rect', { x, y, width: w, height: h, fill, 'shape-rendering': 'crispEdges' }); }
function line(x1, y1, x2, y2, stroke, width, dash) {
  const a = { x1, y1, x2, y2, stroke, 'stroke-width': width, 'shape-rendering': 'crispEdges' };
  if (dash) a['stroke-dasharray'] = dash;
  return shape('line', a);
}
function add(parent, cls, text, style) {
  const el = document.createElement('span');
  el.className = cls;
  el.textContent = text;
  Object.assign(el.style, style);
  parent.appendChild(el);
  return el;
}

/* Price series. Each block has its own origin and resolution;
   a bar is: direction, centre, width, body top, body bottom, high, low. */
const blocks = [
  { x: 50, y: 220, sx: 2.613, sy: 3, bars: `g 22 8 205 234 205 234;g 28 8 174 207 120 231;r 36 8 174 270 165 285;g 43 8 165 279 129 279;g 51 8 138 159 138 183;g 59 8 147 150 129 213;r 67 8 147 159 147 183;g 74 8 120 159 120 165;r 82 8 129 141 120 153;r 93 8 138 186 138 192;r 101 8 174 234 174 258;g 109 8 213 234 213 240;g 117 8 204 225 183 231;r 124 8 204 225 192 276;g 132 8 174 234 174 240;g 140 8 165 168 129 204;r 148 8 156 225 156 225;r 156 8 222 261 165 267;g 163 8 240 270 213 270;g 171 8 222 243 174 258;g 179 8 147 225 147 240;r 187 8 138 177 129 213;g 195 8 147 177 120 183;r 203 8 165 207 165 213;g 211 8 192 207 192 222;g 218 8 174 207 156 231;g 226 8 165 177 156 213;g 234 8 45 186 45 192;r 242 8 54 114 54 120;r 250 8 129 150 111 150;g 257 8 138 159 129 159;g 265 8 90 132 90 147;g 273 8 81 93 54 99;r 281 8 99 150 81 156;r 289 8 147 177 138 192;r 297 8 183 207 138 207;g 305 8 183 195 183 204;r 323 18 183 279 183 360;r 339 8 285 309 276 309;g 346 8 249 309 231 309;g 354 8 249 261 240 276;r 362 8 249 318 222 318;r 370 8 306 345 294 360;r 378 8 342 420 324 420;g 388 8 399 420 369 420;r 396 8 399 456 387 462;g 404 8 387 447 378 462;g 412 8 324 402 306 417;r 420 8 324 336 306 360;r 428 8 333 390 276 417;g 435 8 333 390 333 417;g 443 8 333 345 285 345;g 451 8 306 336 285 336;r 459 8 315 411 306 411;g 466 8 285 411 276 411;r 474 8 276 297 276 315;g 482 8 222 309 174 324;r 493 8 222 261 192 306;r 501 8 258 279 258 294;g 508 8 258 288 258 315;r 516 8 249 309 249 315;r 524 8 315 336 285 351;r 532 8 333 345 324 351;r 540 8 333 345 315 345;g 548 8 324 336 324 342;g 555 8 285 327 258 333;r 563 8 285 309 267 324;r 571 8 315 354 315 360;r 579 8 351 390 333 399;g 589 8 360 402 324 417;g 600 8 333 372 333 399;g 608 8 324 336 294 369;r 616 8 315 336 306 351;r 623 8 333 390 333 417;g 631 8 360 390 351 408;g 639 8 315 381 306 387;g 649 8 213 318 213 324;r 660 8 213 243 138 258;g 668 8 249 252 222 276;g 676 8 249 252 240 276;r 683 8 258 279 231 279;r 691 8 267 297 213 306;g 699 8 231 297 231 306;g 707 8 192 234 174 249;r 715 8 183 195 174 204;r 723 8 192 225 174 240;g 731 8 222 225 213 249;r 738 8 222 252 222 258;r 749 8 249 309 231 351;r 759 8 294 336 276 378;r 770 8 333 447 333 462;r 785 13 444 585 444 603;r 803 13 594 660 573 666;g 819 8 612 660 603 684;r 830 8 630 651 594 696;r 838 8 657 699 630 705;r 850 13 696 735 630 777;r 864 8 714 735 675 777;r 879 8 741 792 723 792;r 900 18 789 873 768 873;r 924 13 870 894 843 918;g 942 13 843 894 759 894;r 960 13 843 930 777 930;g 976 13 852 930 789 963;r 986 8 843 882 834 918;g 997 8 843 882 798 936;r 1008 8 852 912 825 927;g 1015 8 852 921 852 927;g 1023 8 861 864 843 879;r 1034 8 870 894 825 927;g 1044 8 861 903 834 909;g 1052 8 816 873 816 873;g 1064 13 759 837 741 843;g 1083 13 696 771 612 789;r 1096 8 696 801 696 807;g 1104 8 789 801 750 807;g 1112 8 777 801 777 834;r 1125 13 789 921 789 936;g 1140 13 900 921 891 972;r 1156 8 918 996 891 1020;r 1167 8 984 1005 927 1011;g 1177 8 993 1005 954 1047;r 1190 8 1002 1023 984 1065;r 1203 13 1020 1050 936 1050;r 1216 8 1038 1050 954 1065;r 1232 8 1038 1068 1011 1095;g 1243 8 1047 1077 1038 1104;r 1250 8 1056 1107 1056 1113;g 1261 8 1095 1098 1065 1113;r 1269 8 1104 1116 1074 1122;r 1277 8 1113 1125 1095 1158;g 1290 8 1020 1134 1002 1134;g 1300 8 1020 1032 1002 1074;g 1308 8 963 1032 945 1095;r 1318 8 963 1032 954 1038;g 1326 8 1038 1041 1029 1086;g 1334 8 954 1059 954 1065;r 1342 8 963 975 870 975;r 1352 8 972 1032 936 1038;g 1360 8 1020 1032 1011 1065;g 1368 8 984 1014 963 1014;r 1378 8 984 1023 909 1029;g 1389 8 963 1023 909 1023;r 1399 8 954 966 918 993;r 1410 8 963 1032 963 1056;r 1420 8 1011 1125 993 1131;g 1430 8 1104 1125 1095 1131;g 1439 8 1047 1107 1029 1140;g 1451 13 798 1050 798 1065;r 1465 8 816 828 816 972;r 1475 8 825 864 798 918;g 1485 8 816 855 732 861` },
  { x: 620, y: 360, sx: 3, sy: 3, bars: `g 10 9 387 399 285 405;r 22 9 378 462 357 480;r 31 9 450 492 441 516;g 40 9 441 492 432 492;r 49 9 441 501 414 501;r 61 9 498 567 489 591;g 73 9 543 567 507 567;r 82 9 552 657 552 684;g 94 9 636 669 636 720;r 106 9 654 732 654 732;r 124 9 711 789 711 789;r 139 9 786 825 777 831;g 151 9 795 816 759 822;r 169 21 804 834 777 861;g 190 9 813 825 804 849;g 199 9 786 816 759 822;g 208 9 759 789 747 804;r 220 9 768 798 693 822;r 232 9 813 834 768 870;r 244 9 822 852 786 861;g 256 9 786 852 768 870;r 265 9 795 834 759 849;g 274 9 804 816 804 840;g 283 9 768 807 759 822;g 292 9 768 780 747 804;r 304 9 777 852 738 852;g 316 9 684 843 654 849;r 331 9 684 696 636 720;r 340 9 702 816 693 822;r 352 9 813 843 795 861;r 367 9 840 918 840 924;r 379 9 906 927 888 927;g 388 9 831 927 831 933;g 397 9 831 834 813 849;r 406 9 822 834 804 840;g 418 9 786 834 786 849;g 430 9 804 807 786 822;g 439 9 768 816 759 816;g 451 9 759 762 738 786;g 460 9 747 762 729 786;g 472 9 693 732 693 747;r 484 9 684 705 684 759;g 499 9 684 705 654 720;r 514 9 684 762 684 777;r 526 9 768 798 768 849;r 535 9 813 825 804 831;g 544 9 822 834 822 870;r 553 9 822 873 813 873;r 568 15 879 966 879 966;r 589 21 942 1020 933 1065;g 616 15 813 1038 804 1038;g 634 9 804 825 777 870;g 646 9 747 807 711 807;r 661 9 738 852 684 861;r 673 9 840 882 822 882;r 682 9 870 882 849 942;g 694 9 786 891 768 897;r 703 9 786 816 768 879;g 712 9 804 807 795 861;r 721 9 804 864 804 870;g 730 9 831 864 813 870;g 742 9 747 834 720 834;r 754 9 759 807 729 807;r 763 9 795 843 795 849;g 772 9 822 852 804 861;g 784 9 813 834 747 834;r 793 9 804 825 795 840;g 805 9 822 834 777 870;r 817 9 822 834 777 861;g 832 15 768 825 768 906;r 844 9 777 825 768 879;g 853 9 795 834 795 840;r 862 9 804 834 804 870;g 874 9 813 834 804 849;r 883 9 822 834 813 849;g 892 9 720 834 720 849;r 901 9 711 723 666 738;g 916 15 525 723 516 729;g 934 9 480 555 441 600;r 949 9 471 585 471 591;g 958 9 573 576 543 600;g 967 9 516 567 498 573;g 979 9 441 519 432 519;g 991 15 330 435 330 450;r 1006 9 339 351 303 387;g 1021 9 321 351 294 405;r 1033 9 339 501 303 501;r 1045 9 498 648 489 648;g 1060 9 543 630 489 636;r 1069 9 534 546 489 564;g 1078 9 471 555 459 555;r 1087 9 471 501 414 507;r 1096 9 489 501 480 534;g 1105 9 378 501 357 507;r 1114 9 369 381 369 423;r 1123 9 387 426 378 459;r 1132 9 414 462 405 489;g 1144 9 423 453 405 507;g 1159 9 321 426 312 441;g 1171 9 285 324 276 330;r 1180 9 285 351 264 369;r 1192 9 357 381 330 441;r 1201 9 396 426 378 441;g 1213 9 294 417 255 432;r 1225 9 285 315 285 321;r 1234 9 312 333 294 396;r 1243 9 330 408 312 414;r 1255 9 405 474 405 534;g 1264 9 459 474 432 507;r 1279 9 450 483 450 543;g 1291 9 303 483 294 489;g 1306 9 162 306 144 339;g 1321 9 126 165 60 192;r 1333 9 135 213 90 246;g 1342 9 192 222 174 237;r 1354 9 201 231 183 237;g 1366 9 201 231 153 255;g 1410 60 192 195 192 195` },
  { x: 1060, y: 320, sx: 3, sy: 2.8, session: true, bars: `r 151 51 92 899 31 1061;r 199 21 871 1168 627 1173;r 229 27 1140 1445 1140 1565;g 262 21 1002 1453 680 1453;r 295 21 1028 1142 664 1347;r 325 21 1123 1560 1002 1600;g 355 21 1495 1523 1425 1756;g 382 15 1425 1490 1330 1620;r 406 15 1400 1436 1296 1487;g 427 15 1280 1428 1201 1520;r 454 21 1288 1551 1288 1714;g 484 21 1252 1551 1140 1655;g 511 21 1268 1271 1173 1408;g 532 9 1156 1271 1156 1280;g 553 21 871 1159 784 1193;r 577 15 862 1030 837 1086;r 595 15 1019 1072 949 1173;g 610 9 941 1072 879 1072;g 625 9 916 944 904 1028;g 640 15 801 927 767 941;r 664 21 784 1089 750 1140;g 688 9 983 1100 983 1140;r 700 9 983 1126 974 1165;r 718 15 1140 1263 1078 1268;r 745 27 1260 1613 1243 1613;g 784 27 1462 1610 1408 1913;g 814 15 1417 1473 1366 1548;g 835 15 1330 1420 1280 1434;g 853 9 1131 1324 1086 1347;g 871 15 991 1134 958 1148;g 895 15 983 994 862 1148;r 916 15 983 1022 958 1114;r 940 27 1028 1341 854 1408;r 973 21 1366 1598 1330 1848` },
  { x: 0, y: 0, sx: 1, sy: 1, session: true, bars: `r 1394 7 890 931 876 965;r 1403 5 926 964 905 980;r 1411 5 963 1003 940 1020;r 1419 5 985 1033 955 1048;r 1429 9 1033 1158 1033 1163;g 1440 7 1136 1149 1102 1163;g 1449 7 1102 1133 1077 1163;r 1459 7 1102 1109 1074 1145;g 1467 5 1074 1103 1052 1117;r 1473 3 1077 1081 1061 1102;r 1478 5 1083 1090 1030 1095;g 1486 7 975 1084 966 1092;g 1494 7 934 980 922 984;g 1503 7 869 938 857 946;r 1511 5 876 952 866 968;g 1517 3 930 952 900 960;r 1522 5 932 986 916 990;r 1527 3 950 978 936 990;g 1533 5 940 984 922 1000;g 1540 5 915 950 905 978;g 1546 3 905 935 869 960;g 1553 5 876 912 869 940;r 1559 3 880 920 857 938;g 1568 3 851 905 851 915;r 1572 3 851 895 842 905;g 1576 3 854 882 845 900;g 1580 3 851 855 826 866;g 1586 5 832 852 795 863;g 1593 5 826 830 820 902;g 1598 3 826 833 808 869;r 1604 3 832 839 823 895;r 1609 3 842 867 838 905;g 1615 3 835 870 808 876;r 1619 3 829 870 829 873;r 1622 3 873 898 857 912;r 1626 3 896 934 869 950;r 1633 7 930 992 920 1008;g 1641 3 978 1000 940 1049;r 1648 5 945 990 938 1010;g 1653 3 960 990 950 1004;r 1656 3 968 1006 955 1046;r 1660 3 988 1010 972 1020;r 1663 3 1002 1032 990 1038;r 1668 5 1020 1041 1000 1061;r 1673 3 1043 1053 1015 1067;g 1676 3 1030 1053 1010 1058;r 1681 5 1027 1050 1018 1050;g 1687 3 1022 1041 1005 1049;r 1690 3 1022 1034 1014 1038;g 1694 3 1012 1035 1000 1040;g 1698 3 1008 1022 990 1049;g 1703 5 995 1015 988 1024;r 1708 3 998 1022 975 1036;g 1712 3 990 1015 980 1025;g 1718 5 972 1008 955 1020;r 1722 3 970 985 948 992;g 1725 3 955 990 945 996;r 1729 3 960 983 943 1000;g 1734 5 958 985 940 990;r 1738 3 955 972 940 985;g 1743 5 948 970 935 978;g 1747 3 932 958 925 965;r 1751 3 930 945 918 962;g 1754 3 915 940 905 948;r 1757 3 905 920 890 938;g 1760 3 893 918 880 925;g 1766 5 860 897 860 905` },
  { x: 1540, y: 380, sx: 3, sy: 3, session: true, bars: `g 700 9 1404 1443 1365 1458;g 712 9 1338 1398 1338 1431;r 724 15 1338 1434 1320 1497;g 739 9 1320 1443 1302 1467;g 760 21 1227 1332 1179 1332;r 781 9 1218 1239 1170 1272;r 799 15 1245 1407 1200 1407;g 814 9 1329 1398 1329 1440;r 823 9 1338 1368 1311 1404;r 838 15 1347 1398 1245 1467;g 865 27 1032 1416 912 1440;r 892 15 1032 1173 1023 1200;g 910 15 1059 1164 1023 1209;g 925 9 1023 1053 1005 1089;g 943 15 873 1017 828 1050;g 961 15 828 858 810 930;g 985 21 708 822 651 828;g 1003 9 699 729 642 753;r 1024 21 699 822 651 939;g 1048 15 762 840 717 855;g 1066 9 585 756 585 762;r 1087 15 594 663 576 753;r 1108 15 669 831 651 894;g 1129 15 585 831 558 837;g 1144 9 540 588 540 678;g 1162 21 411 543 390 576;r 1186 15 411 459 399 504;g 1210 21 195 441 159 441;r 1237 21 195 300 168 372;g 1264 15 159 291 150 381;g 1279 9 102 180 75 216` }
];

/* Session zones and grid */
box(1110, 331, 1337, 832, '#0d0203');
box(1110, 353, 1337, 61, '#25080c');
box(1998, 430, 144, 244, '#1a2112');
box(1998, 674, 144, 94, '#300814');
for (let p = 5930; p >= 5470; p -= 10) line(X0, Math.round(priceY(p)) + .5, X0 + W, Math.round(priceY(p)) + .5, 'rgba(255,255,255,.06)', 1);
line(1099.5, Y0, 1099.5, Y0 + H, '#6b6640', 1, '1 2');

/* Volume */
const BLUE = '#0d1f57', GRAY = '#222d3a';
let seed = 7;
const rnd = () => (seed = (seed * 16807) % 2147483647) / 2147483647;
for (let x = 62; x < 1078; x += 3) {
  const h = 4 + Math.floor(rnd() * rnd() * 18);
  box(x, 1371 - h, rnd() > .3 ? 1 : 2, h, rnd() > .5 ? BLUE : GRAY);
}
for (let x = 1530; x < 1962; x += 5) {
  const h = 5 + Math.floor(rnd() * 12);
  box(x, 1371 - h, 3, h, rnd() > .5 ? BLUE : GRAY);
}
const volumes = [
  [0, 1220, 1.742, 'g300 14 369;b409 3 423;b480 6 420;b518 5 417;g586 4 420;g598 5 417;g609 7 405;g621 8 399;b632 5 417;g652 7 411;g663 7 417;g671 6 411;g685 15 351;g702 9 402;b714 10 396;g726 7 411;b736 6 408;b750 6 423;g774 5 414;g785 6 423;b796 8 408;b807 9 396;g1179 13 366;g1423 13 381;b1520 6 420;b1548 6 417;b1562 6 411'],
  [860, 1040, 1.742, 'b63 6 951;b114 8 945;b126 8 951;b158 7 951;b173 6 954;g189 6 957;b247 6 957;g322 6 954;b345 8 957;b399 35 24;g437 33 198;g462 14 912;g482 17 867;b502 14 894;g520 16 894;g538 14 912;b554 13 906;b569 11 930;g583 10 933;b597 10 939;g612 14 900;b628 12 918;b644 12 924;b656 6 957;b671 14 909;g682 8 948;g695 8 951;b708 10 960;b721 7 948;g734 12 912;b744 5 957;g755 5 960;g766 10 942;g781 15 879;b801 21 822;b821 9 942;b832 8 945;b842 7 957;b853 10 939;b867 11 927;g879 6 951;g894 14 885;g912 15 894;g929 13 918;g948 13 912;g961 7 945;g973 11 927;g993 18 852;b1009 13 921;b1027 14 912;g1043 12 915;b1058 11 939;g1068 5 960;g1078 7 948;b1090 12 921;b1105 13 924;b1121 12 915;g1135 8 948;g1152 8 945;g1163 5 963;b1174 9 933;b1183 5 957;b1197 9 936;b1209 8 948;g1216 8 960;b1232 5 957;b1246 4 957;b1265 8 942;b1275 8 945;b1287 5 954;g1337 5 951;g1347 10 933;b1362 11 927;g1406 9 942;g1432 7 948;b1486 8 948;g1515 7 951;b1531 8 951;b1545 7 954'],
  [1740, 1090, 1.912, 'b0 3 801;b12 5 804;b50 12 777;b62 6 807;g80 8 798;g90 4 810;b100 13 765;g115 6 804;g127 8 798;g152 9 789;b170 17 729;g186 9 798;b199 8 798;b208 3 816;b217 9 795;b231 8 798;b243 12 774;g271 15 756;b287 8 801;b298 6 801;g309 9 789;g323 12 789;b337 7 798;b348 4 813;b359 10 774;g374 10 795;b389 14 762;g406 12 765;b420 10 786;b433 2 820']
];
for (const [ox, oy, sx, data] of volumes) for (const v of data.split(';')) {
  const [c, w, t] = v.slice(1).split(' ').map(Number);
  const top = Math.round(oy + t / 3), width = Math.max(1, Math.round(w / sx));
  box(Math.round(ox + (c - w / 2) / sx), top, width, 1371 - top, v[0] === 'b' ? BLUE : GRAY);
}
const average = [
  [0, 1220, 1.742, '103,430 150,434 180,438 220,437 290,437 310,434 380,430 430,435 490,437 530,435 600,436 640,425 680,412 715,405 760,410 790,420 830,427 1469,420 1500,420 1530,429'],
  [860, 1040, 1.742, '0,960 20,969 100,969 150,966 190,962 240,968 375,964 398,885 418,855 437,822 462,819 482,808 520,796 612,777 628,850 644,910 671,918 708,935 740,936 765,943 801,930 850,930 894,925 948,914 973,927 993,920 1045,914 1060,914 1080,922 1135,922 1165,938 1216,942 1245,952 1300,956 1370,951 1450,960'],
  [1740, 1090, 1.912, '0,813 50,815 100,808 160,798 240,795 300,789 340,794 425,786']
].map(([ox, oy, sx, s]) => s.split(' ').map(q => q.split(',').map(Number)).map(([a, b]) => (ox + a / sx).toFixed(0) + ',' + (oy + b / 3).toFixed(0)).join(' ')).join(' ');
shape('polyline', { points: average, fill: 'none', stroke: '#5a5226', 'stroke-width': 1, 'stroke-dasharray': '1 1' });

/* Level lines below the price bars */
line(1110, 353, X0 + W, 353, '#c98a3a', 2);
line(X0, 173.5, 212, 173.5, '#b22833', 1);

/* Volume weighted average */
const vwap = [
  [1060, 320, 3, 2.8, '199,693 229,779 262,802 295,824 325,858 355,900 382,925 406,942 427,956 454,987 484,1003 511,1012 532,1017 640,1009 718,1015 745,1037 784,1073 814,1082 835,1085 853,1087 895,1085 916,1085 973,1105 1003,1118 1030,1135 1054,1146 1078,1163 1108,1205 1141,1227 1168,1250 1198,1269 1222,1283 1240,1289 1255,1297 1279,1309 1303,1317 1330,1323 1354,1328 1372,1331 1387,1337 1402,1340 1420,1345 1441,1348 1459,1351 1480,1354 1498,1357'],
  [1540, 380, 3, 3, '19,1267 40,1270 58,1273 70,1273 85,1276 97,1276 109,1279 121,1279 139,1279 160,1282 175,1282 193,1282 208,1285 226,1285 238,1285 247,1285 259,1288 280,1294 304,1303 325,1306 340,1309 349,1312 361,1312 370,1315 385,1321 400,1324 409,1327 424,1333 442,1336 451,1339 463,1342 475,1345 490,1348 505,1348 517,1354 535,1357 547,1357 556,1360 568,1360 583,1363 595,1366 610,1366 622,1369 634,1369 643,1369 652,1372 661,1372 679,1372 760,1372 781,1372 823,1372 892,1366 910,1363 925,1363 943,1360 961,1354 985,1348 1003,1345 1024,1339 1048,1336 1066,1333 1087,1327 1108,1324 1129,1318 1144,1315 1162,1306 1186,1303 1210,1291 1237,1279 1264,1270 1279,1267']
];
for (const [ox, oy, sx, sy, s] of vwap) for (const q of s.split(' ')) {
  const [a, b] = q.split(',').map(Number);
  const x = Math.floor(ox + a / sx), y = Math.floor(oy + b / sy);
  box(x - 1, y, 3, 1, '#2f5fff');
  box(x, y - 1, 1, 3, '#2f5fff');
}

/* Bars, with the weekly open and low marks at every session bar */
const marks = [];
for (const b of blocks) for (const row of b.bars.split(';')) {
  const f = row.split(' ');
  const [c, w, t, bt, hi, lo] = f.slice(1).map(Number);
  const color = f[0] === 'g' ? UP : DOWN;
  const X = Math.floor(b.x + c / b.sx), bw = Math.max(1, Math.round(w / b.sx));
  const Y = v => Math.round(b.y + v / b.sy);
  box(X, Y(hi), 1, Math.max(1, Y(lo) - Y(hi)), color);
  box(X - Math.floor(bw / 2), Y(t), bw, Math.max(1, Y(bt) - Y(t)), color);
  if (b.session) marks.push(X + .5);
}
for (const x of marks) {
  shape('circle', { cx: x, cy: 353.5, r: 2.5, fill: '#dba77d' });
  shape('circle', { cx: x, cy: 715.5, r: 2.5, fill: x > 1855 ? '#9c2530' : '#a80a0c' });
}
box(1088, 423, 12, 1, '#12a6bd');

/* Overlays */
const zone = box(1158.5, 681.5, 847, 10, 'rgba(255,152,0,.22)');
zone.setAttribute('stroke', '#f09a14');
line(X0 + 7, 424.5, X0 + W, 424.5, '#fbc02d', 3, '3 6');
line(62, 534, X0 + W, 534, '#b2ebf2', 2, '2 4');
line(1099, 838.5, 1962, 838.5, '#a59a4e', 1, '5 6');
shape('path', { d: 'M1280 561h3v9h3l-4.500 6-4.500-6h3z', fill: '#4caf50' });
line(1998, 674.5, 2142, 674.5, '#9598a1', 1);
line(1806, 481, 2011, 481, 'rgba(160,160,160,.3)', 2);
shape('circle', { cx: 2012, cy: 481, r: 2.5, fill: '#66756a' });
line(X0, 766.5, X0 + W, 766.5, '#8a93a0', 1, '5 6');
line(1995.5, Y0, 1995.5, Y0 + H, '#8a93a0', 1, '5 6');
shape('rect', { x: 1990, y: 759, width: 17, height: 17, rx: 5, fill: 'rgba(33,88,240,.25)' });
for (const [x, y, r] of [[1998.5, 430.5, 3], [1998.5, 674.5, 6], [2141.5, 674.5, 3], [1998.5, 767.5, 3]])
  shape('rect', { x: x - 5.5, y: y - 5.5, width: 11, height: 11, rx: r, fill: '#020617', stroke: '#2158f0', 'stroke-width': 2 });

for (const [cls, text, x, y] of [
  ['note', '79 (1.377%) 79 165.83', 2070, 421.5], ['note pink', '30 (0.523%) 30 75', 2070, 775.5],
  ['note ratio', '84 ~ 0\n2.63', 2070, 674.5], ['note callout', '5,800', 1781, 481], ['note plain', '1230', 213, 168]
]) add(plot, cls, text, { left: px(x), top: py(y) });
for (const [text, y, bg, fg] of [['week :w_op', 353.5, '#fff', '#131722'], ['week :LL', 715.5, '#f23645', '#fff'], ['VWAP', 802.5, '#2962ff', '#fff']])
  add(plot, 'ltag', text, { top: py(y), background: bg, color: fg });
add(plot, 'ltag cross', '', { top: py(766.5) }).innerHTML = '<svg viewBox="0 0 19 19"><circle cx="9.5" cy="9.5" r="8"/><path d="M9.500 6v7M6 9.500h7"/></svg>';

/* Price axis */
add(yaxis, 'span', '', { top: py(430), height: (338 / H * 100) + '%' });
for (let p = 5930; p >= 5470; p -= 10) add(yaxis, 'tick', p.toLocaleString('en-US'), { top: py(priceY(p) - 2) });
for (const [text, y, bg, fg, cls] of [
  ['5,925', 96, '#787b86'], ['5,903', 164, '#e91e63'], ['5,851', 325, '#4caf50'], ['5,842', 353, '#fff', '#131722'],
  ['00:11', 414, '#ffeb3b', '#5c5515'], ['5,817', 430, '#4caf50'], ['5,791', 510, '#787b86'], ['5,758', 613, '#e91e63'],
  ['5,738', 674, '#787b86'], ['5,725', 715, '#f23645'], ['5,708', 766, '#363a45', '#fff', ' tall'], ['5,697', 802, '#2962ff']
]) add(yaxis, 'ytag' + (cls || ''), text, { top: py(y), background: bg, color: fg || '#fff' });
for (const [y, bg] of [[430, '#4caf50'], [674, '#787b86'], [767, '#e91e63']]) add(yaxis, 'edge', '', { top: py(y), background: bg });

/* Time axis */
add(xaxis, 'range', '', { left: px(2070), width: (144 / W * 100) + '%' });
for (const [t, x] of [['14:20', 85], ['14:25', 145], ['14:30', 213], ['14:35', 275], ['14:40', 340], ['14:45', 445], ['15:10', 855], ['15:15', 925],
  ['15:20', 1001], ['09:05', 1281], ['09:10', 1449], ['09:15', 1575], ['09:20', 1676], ['09:25', 1760], ['09:30', 1881], ['09:40', 2067],
  ['09:50', 2210], ['09:55', 2281], ['10:00', 2353], ['10:05', 2424]]) add(xaxis, '', t, { left: px(x) });
add(xaxis, 'day', '18', { left: px(1110) });
add(xaxis, 'tag', '', { left: px(2063.5), width: (5 / W * 100) + '%' });
add(xaxis, 'tag gray', '5月 18 (月)   09:35:00', { left: px(1995.5), width: (135 / W * 100) + '%' });
add(xaxis, 'tag', '5月 18 (月)   09:45:15', { left: px(2142), width: (134 / W * 100) + '%' });
```
